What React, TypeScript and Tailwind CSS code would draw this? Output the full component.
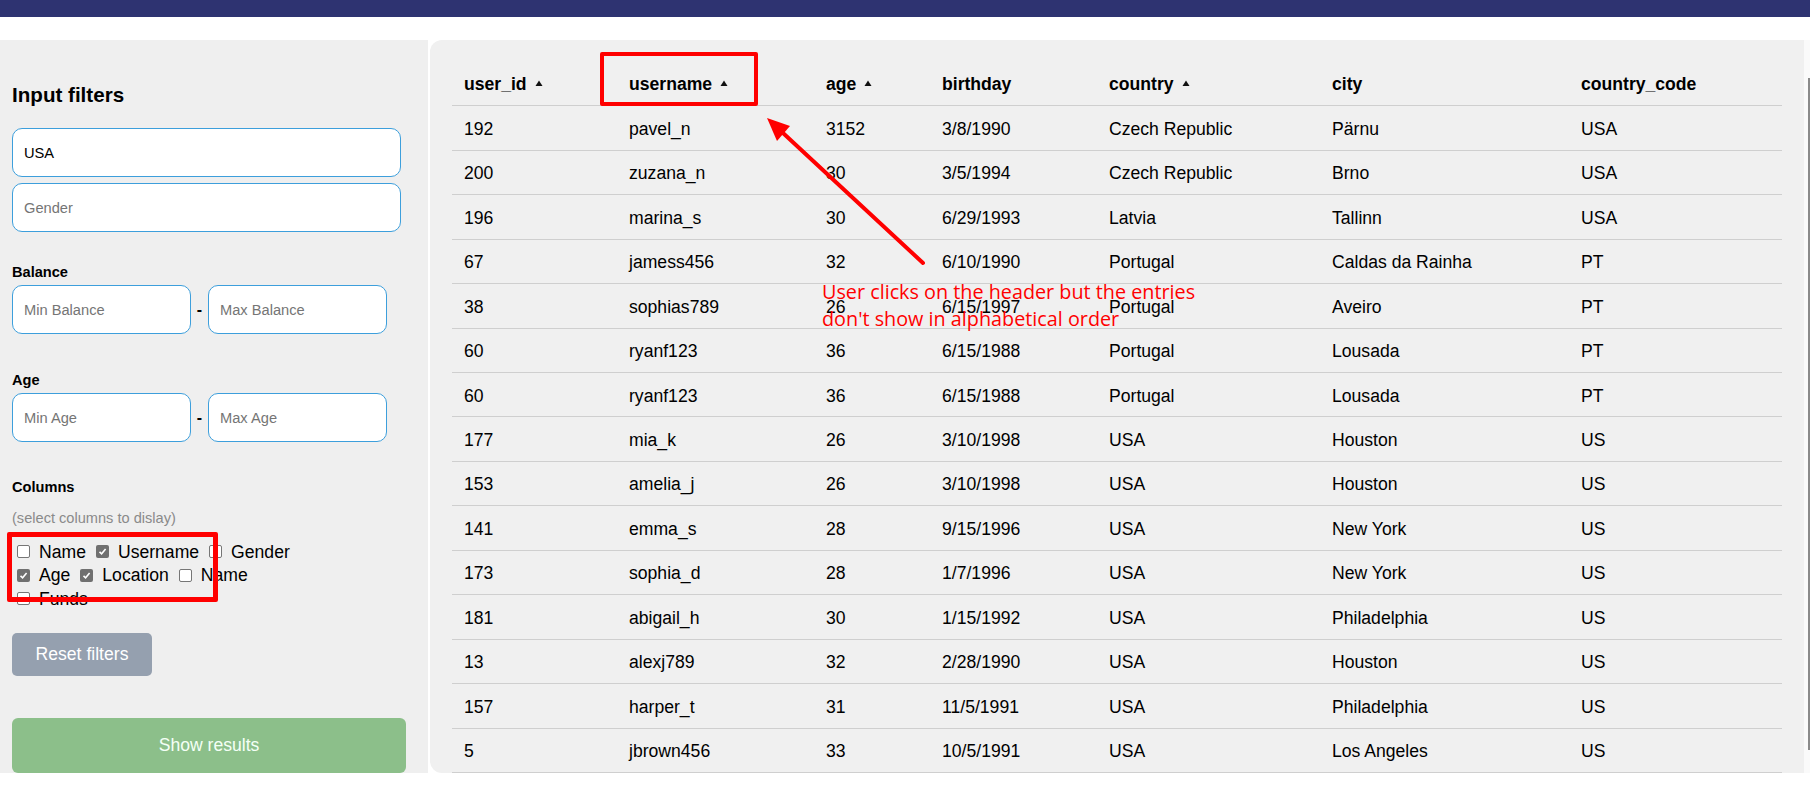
import React from 'react';

const rows = [
  ['192', 'pavel_n', '3152', '3/8/1990', 'Czech Republic', 'Pärnu', 'USA'],
  ['200', 'zuzana_n', '30', '3/5/1994', 'Czech Republic', 'Brno', 'USA'],
  ['196', 'marina_s', '30', '6/29/1993', 'Latvia', 'Tallinn', 'USA'],
  ['67', 'jamess456', '32', '6/10/1990', 'Portugal', 'Caldas da Rainha', 'PT'],
  ['38', 'sophias789', '26', '6/15/1997', 'Portugal', 'Aveiro', 'PT'],
  ['60', 'ryanf123', '36', '6/15/1988', 'Portugal', 'Lousada', 'PT'],
  ['60', 'ryanf123', '36', '6/15/1988', 'Portugal', 'Lousada', 'PT'],
  ['177', 'mia_k', '26', '3/10/1998', 'USA', 'Houston', 'US'],
  ['153', 'amelia_j', '26', '3/10/1998', 'USA', 'Houston', 'US'],
  ['141', 'emma_s', '28', '9/15/1996', 'USA', 'New York', 'US'],
  ['173', 'sophia_d', '28', '1/7/1996', 'USA', 'New York', 'US'],
  ['181', 'abigail_h', '30', '1/15/1992', 'USA', 'Philadelphia', 'US'],
  ['13', 'alexj789', '32', '2/28/1990', 'USA', 'Houston', 'US'],
  ['157', 'harper_t', '31', '11/5/1991', 'USA', 'Philadelphia', 'US'],
  ['5', 'jbrown456', '33', '10/5/1991', 'USA', 'Los Angeles', 'US'],
];

const columns = [
  { key: 'user_id', sort: true },
  { key: 'username', sort: true },
  { key: 'age', sort: true },
  { key: 'birthday', sort: false },
  { key: 'country', sort: true },
  { key: 'city', sort: false },
  { key: 'country_code', sort: false },
];

// fixed column widths: 165 197 116 167 223 249 213
const gridCols = 'grid grid-cols-[165px_197px_116px_167px_223px_249px_213px]';

const checkboxes = [
  { label: 'Name', checked: false },
  { label: 'Username', checked: true },
  { label: 'Gender', checked: false },
  { label: 'Age', checked: true },
  { label: 'Location', checked: true },
  { label: 'Name', checked: false },
  { label: 'Funds', checked: false },
];

function SortCaret() {
  return (
    <svg width="8" height="7" viewBox="0 0 8 7" className="ml-[8px] inline-block -translate-y-[2px]">
      <path d="M4 0.5 L7.5 6 L0.5 6 Z" fill="#111" />
    </svg>
  );
}

function Check({ checked }: { checked: boolean }) {
  if (checked) {
    return (
      <span className="flex h-[13px] w-[13px] items-center justify-center rounded-[2px] bg-[#707070]">
        <svg width="9" height="9" viewBox="0 0 9 9">
          <path d="M1.5 4.8 L3.6 6.8 L7.6 2" fill="none" stroke="white" strokeWidth="1.6" />
        </svg>
      </span>
    );
  }
  return <span className="h-[13px] w-[13px] rounded-[2px] border border-[#767676] bg-white" />;
}

const inputCls =
  'h-[49px] rounded-[10px] border border-[#3d9fdc] bg-white px-[11px] text-[14.67px] text-black outline-none placeholder:text-[#757575]';

export default function App() {
  return (
    <div className="relative h-[786px] w-[1810px] overflow-hidden bg-white font-['Liberation_Sans',Arial,sans-serif] text-black">
      <div className="h-[17px] bg-[#2e3371]" />

      <div className="mt-[23px] flex h-[733px]">
        {/* Filters */}
        <aside className="flex w-[428px] flex-col bg-[#efefef] pl-[12px]">
          <h3 className="mt-[43px] text-[20.6px] font-bold leading-[24px]">Input filters</h3>
          <input className={`${inputCls} mt-[21px] w-[389px]`} defaultValue="USA" />
          <input className={`${inputCls} mt-[6px] w-[389px]`} placeholder="Gender" />

          <h5 className="mt-[31.5px] text-[14.6px] font-bold leading-[17px]">Balance</h5>
          <div className="mt-[4.5px] flex items-center">
            <input className={`${inputCls} w-[179px]`} placeholder="Min Balance" />
            <span className="w-[17px] text-center text-[16px] font-bold">-</span>
            <input className={`${inputCls} w-[179px]`} placeholder="Max Balance" />
          </div>

          <h5 className="mt-[37.5px] text-[14.6px] font-bold leading-[17px]">Age</h5>
          <div className="mt-[4.5px] flex items-center">
            <input className={`${inputCls} w-[179px]`} placeholder="Min Age" />
            <span className="w-[17px] text-center text-[16px] font-bold">-</span>
            <input className={`${inputCls} w-[179px]`} placeholder="Max Age" />
          </div>

          <h5 className="mt-[36.5px] text-[14.6px] font-bold leading-[17px]">Columns</h5>
          <p className="mt-[14px] text-[14.6px] leading-[17px] text-[#8a8a8a]">(select columns to dislay)</p>
          <div className="ml-[5px] mt-[13.5px] flex w-[300px] flex-wrap">
            {checkboxes.map((c, i) => (
              <label key={i} className="mr-[10px] flex h-[23.5px] items-center text-[17.6px]">
                <Check checked={c.checked} />
                <span className="ml-[9px]">{c.label}</span>
              </label>
            ))}
          </div>

          <button className="mt-[22px] h-[43px] w-[140px] rounded-[5px] bg-[#95a0af] text-[17.6px] text-white">
            Reset filters
          </button>
          <button className="mt-[42px] h-[55px] w-[394px] rounded-[6px] bg-[#8cbf8a] text-[17.6px] text-[#f4fff6]">
            Show results
          </button>
        </aside>

        <div className="w-[2px]" />

        {/* Results table */}
        <main className="w-[1374px] rounded-l-[12px] bg-[#f0f0f0] px-[22px] pt-[22px] text-[17.6px]">
          <div className={`${gridCols} h-[44.4px] items-center border-b border-[#cfcfcf] pt-[1px] font-bold`}>
            {columns.map(c => (
              <div key={c.key} className="pl-[12px]">
                {c.key}
                {c.sort && <SortCaret />}
              </div>
            ))}
          </div>
          {rows.map((r, i) => (
            <div key={i} className={`${gridCols} h-[44.45px] items-center border-b border-[#cfcfcf] pt-[2px]`}>
              {r.map((v, j) => (
                <div key={j} className="pl-[12px]">{v}</div>
              ))}
            </div>
          ))}
        </main>

        {/* page scrollbar */}
        <div className="relative w-[6px] bg-[#fafafa]">
          <div className="absolute right-0 top-[38px] h-[672px] w-[2px] bg-[#8a8a8a]" />
        </div>
      </div>

      {/* Annotations */}
      <div className="absolute left-[7px] top-[532px] h-[70px] w-[211px] rounded-[2px] border-[5px] border-[#ff0000]" />
      <div className="absolute left-[600px] top-[52px] h-[54px] w-[158px] rounded-[2px] border-[4px] border-[#ff0000]" />
      <svg className="absolute left-0 top-0" width="1810" height="786">
        <line x1="923" y1="263" x2="783" y2="133" stroke="#ff0000" strokeWidth="4" strokeLinecap="round" />
        <polygon points="767,118 790,126 777,141" fill="#ff0000" />
      </svg>
      <div className="absolute left-[822px] top-[278px] font-['Open_Sans','Noto_Sans',sans-serif] text-[19.8px] leading-[27px] text-[#ff0000]">
        User clicks on the header but the entries
        <br />
        don't show in alphabetical order
      </div>
    </div>
  );
}
